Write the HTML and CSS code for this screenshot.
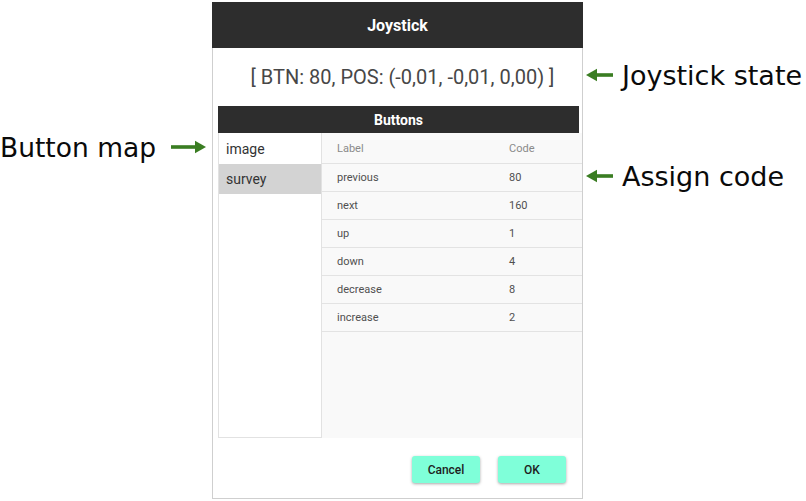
FILE: index.html
```html
<!DOCTYPE html>
<html>
<head>
<meta charset="utf-8">
<link rel="stylesheet" href="styles.css">
</head>
<body>
<div class="page">
  <div class="notes-left">
    <div class="note note-map">
      <span class="note-text">Button map</span>
      <svg class="arrow-r" width="36" height="14" viewBox="0 0 36 14"><rect x="0" y="5.2" width="26" height="3.6" fill="#3a7d22"/><polygon points="24,0.8 35,7 24,13.2" fill="#3a7d22"/></svg>
    </div>
  </div>

  <div class="dialog">
    <div class="dlg-title">Joystick</div>
    <div class="dlg-state">[ BTN: 80, POS: (-0,01, -0,01, 0,00) ]</div>
    <div class="panel">
      <div class="panel-bar">Buttons</div>
      <div class="panel-body">
        <ul class="maps">
          <li>image</li>
          <li class="sel">survey</li>
        </ul>
        <div class="codes">
          <div class="row head"><span>Label</span><span>Code</span></div>
          <div class="row"><span>previous</span><span>80</span></div>
          <div class="row"><span>next</span><span>160</span></div>
          <div class="row"><span>up</span><span>1</span></div>
          <div class="row"><span>down</span><span>4</span></div>
          <div class="row"><span>decrease</span><span>8</span></div>
          <div class="row"><span>increase</span><span>2</span></div>
        </div>
      </div>
    </div>
    <div class="dlg-actions">
      <button class="btn">Cancel</button>
      <button class="btn">OK</button>
    </div>
  </div>

  <div class="notes-right">
    <div class="note note-state">
      <svg class="arrow-l" width="28" height="14" viewBox="0 0 28 14"><polygon points="0,7 11,0.8 11,13.2" fill="#3a7d22"/><rect x="10" y="5.2" width="17" height="3.6" fill="#3a7d22"/></svg>
      <span class="note-text">Joystick state</span>
    </div>
    <div class="note note-code">
      <svg class="arrow-l" width="28" height="14" viewBox="0 0 28 14"><polygon points="0,7 11,0.8 11,13.2" fill="#3a7d22"/><rect x="10" y="5.2" width="17" height="3.6" fill="#3a7d22"/></svg>
      <span class="note-text">Assign code</span>
    </div>
  </div>
</div>
</body>
</html>
```

FILE: styles.css
```css
* { box-sizing: border-box; }
html, body { margin: 0; padding: 0; background: #ffffff; }
body { font-family: Roboto, "Liberation Sans", sans-serif; overflow: hidden; }

.page {
  display: flex;
  width: 806px;
  height: 501px;
}

/* annotations */
.notes-left {
  width: 212px;
  flex: none;
  padding-top: 132px;
}
.note {
  display: flex;
  align-items: center;
  height: 30px;
}
.note-text {
  font-family: "DejaVu Sans", "Open Sans", sans-serif;
  font-size: 26.5px;
  color: #0a0a0a;
  white-space: nowrap;
}
.note-map {
  justify-content: space-between;
  padding-right: 5px;
}

.notes-right {
  flex: 1;
  padding-left: 3px;
  padding-top: 60px;
  overflow: hidden;
}
.notes-right .note { gap: 8px; }
.notes-right .note-text { font-size: 27px; }
.note-code { margin-top: 71px; }
.arrow-l, .arrow-r { flex: none; display: block; }

/* dialog */
.dialog {
  flex: none;
  width: 371px;
  height: 497px;
  margin-top: 2px;
  border: 1px solid #cfcfcf;
  border-top: none;
  background: #ffffff;
  display: flex;
  flex-direction: column;
}
.dlg-title {
  height: 46px;
  margin: 0 -1px;
  background: #2d2d2d;
  color: #ffffff;
  font-weight: 700;
  font-size: 16px;
  display: flex;
  align-items: center;
  justify-content: center;
}
.dlg-state {
  height: 58px;
  display: flex;
  align-items: center;
  justify-content: center;
  padding-left: 10px;
  font-size: 20px;
  color: #474747;
}
.panel {
  padding-left: 5px;
}
.panel-bar {
  width: 361px;
  height: 27px;
  background: #2d2d2d;
  color: #ffffff;
  font-weight: 700;
  font-size: 14px;
  display: flex;
  align-items: center;
  justify-content: center;
}
.panel-body {
  display: flex;
  height: 305px;
}
.maps {
  list-style: none;
  margin: 0;
  padding: 0;
  width: 104px;
  flex: none;
  border: 1px solid #e2e2e2;
  border-top: none;
  background: #ffffff;
}
.maps li {
  height: 30px;
  display: flex;
  align-items: center;
  padding-left: 7px;
  font-size: 14px;
  color: #333333;
}
.maps li:first-child { height: 31px; }
.maps li.sel { background: #d3d3d3; }

.codes {
  flex: 1;
  background: #f9f9f9;
}
.row {
  display: grid;
  grid-template-columns: 171px 1fr;
  align-items: center;
  height: 28px;
  padding-left: 15px;
  border-bottom: 1px solid #e3e3e3;
  font-size: 11px;
  color: #505050;
}
.row span:last-child { padding-left: 1px; }
.row.head {
  height: 31px;
  color: #8a8a8a;
}

.dlg-actions {
  flex: 1;
  display: flex;
  justify-content: flex-end;
  align-items: flex-start;
  gap: 18px;
  padding: 18px 16px 0 0;
}
.btn {
  width: 68px;
  height: 27px;
  border: none;
  border-radius: 3px;
  background: #7fffd9;
  box-shadow: 0 1px 3px rgba(0, 0, 0, 0.35);
  font-family: Roboto, "Liberation Sans", sans-serif;
  font-weight: 500;
  font-size: 12px;
  color: #1e1e1e;
  padding: 0;
}
```
